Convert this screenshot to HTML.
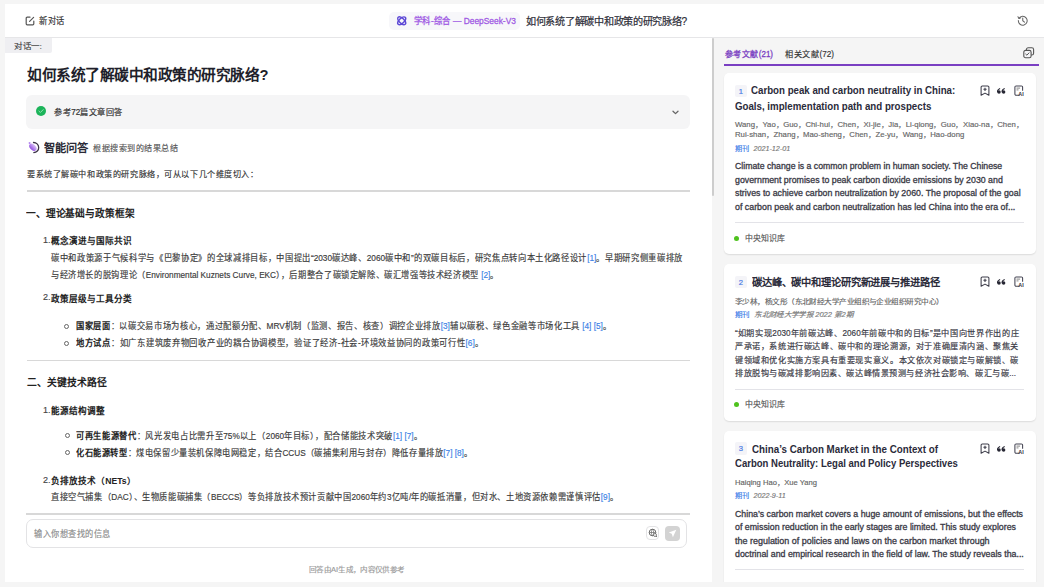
<!DOCTYPE html>
<html lang="zh-CN"><head><meta charset="utf-8">
<style>
html,body{margin:0;padding:0;-webkit-text-stroke-width:.15px;width:1044px;height:587px;overflow:hidden;background:#f5f5f5;font-family:"Liberation Sans",sans-serif;color:#333}
.a{position:absolute}
.l{position:absolute;white-space:nowrap;line-height:12px;height:12px;transform-origin:0 50%}
#hdr{position:absolute;left:4.5px;top:4px;width:1039.5px;height:33px;background:#fff;border-bottom:1px solid #e6e6e8}
#left{position:absolute;left:4.5px;top:38px;width:707.5px;height:544.2px;background:#fff;overflow:hidden}
#track{position:absolute;left:712px;top:38px;width:7px;height:544.2px;background:#f5f5f5}
#thumb{position:absolute;left:712px;top:38px;width:2.2px;height:158px;background:#cdcdcd;border-radius:1px}
#vline{display:none}
#right{position:absolute;left:720px;top:38px;width:324px;height:544.2px;background:#f5f5f5;overflow:hidden}
.b,b,.ct{font-weight:bold;-webkit-text-stroke-width:0}
.ref{color:#3b82e6}
.hr{position:absolute;height:1.8px;background:#d8d8d8}
.card{position:absolute;left:3.9px;width:312.3px;background:#fff;border-radius:5px;box-shadow:0 1px 1.5px rgba(0,0,0,.1)}
.badge{position:absolute;left:11.2px;width:11.8px;height:12.8px;background:#f4f4f8;border-radius:2px;color:#4b7be5;font-size:7.6px;line-height:13.4px;text-align:center;-webkit-text-stroke-width:.2px}
.ct{font-size:10.4px;font-weight:bold;color:#2b2b3a}
.au{font-size:7.2px;color:#666}
.jk{font-size:7.2px;color:#3b7be8}
.dt{font-size:7.2px;color:#777;font-style:italic}
.ab{font-size:8.5px;color:#3a3a46;-webkit-text-stroke-width:.3px}
.div{position:absolute;left:11.2px;width:289px;height:1px;background:#e3e3e8}
.dot{position:absolute;left:10.6px;width:5px;height:5px;border-radius:50%;background:#4fc21e}
.kb{font-size:7.9px;color:#555}
.ico{position:absolute}
</style></head><body>

<!-- HEADER -->
<div id="hdr"></div>
<svg class="ico" style="left:25px;top:16px" width="10" height="10" viewBox="0 0 10 10"><path d="M5 1.2H2.2a1 1 0 0 0-1 1v5.6a1 1 0 0 0 1 1h5.6a1 1 0 0 0 1-1V5" fill="none" stroke="#555" stroke-width="1.2" stroke-linecap="round"/><path d="M4.6 5.4L8.6 1.4" stroke="#555" stroke-width="1.2" stroke-linecap="round"/></svg>
<div class="l" style="left:38.9px;top:14.7px;font-size:8.7px;--w:25.6;transform:scaleX(0.9481)">新对话</div>

<div class="a" style="left:389.2px;top:11.5px;width:131px;height:18.4px;background:#f7f7fa;border-radius:5px"></div>
<svg class="ico" style="left:395.6px;top:15.3px" width="11.4" height="11.6" viewBox="0 0 12 12"><g fill="none" stroke="#5d48d6" stroke-width="1.55"><ellipse cx="6" cy="6" rx="2.6" ry="5.2" transform="rotate(45 6 6)"/><ellipse cx="6" cy="6" rx="2.6" ry="5.2" transform="rotate(-45 6 6)"/></g></svg>
<div class="l" style="left:413.7px;top:14.5px;font-size:8.9px;color:#a05ae4;-webkit-text-stroke-width:.3px;--w:101.9;transform:scaleX(0.9432)">学科-综合 — DeepSeek-V3</div>
<div class="l" style="left:526px;top:15.8px;font-size:10.4px;color:#2f2f3a;-webkit-text-stroke-width:.22px;--w:161.2;transform:scaleX(0.9724)">如何系统了解碳中和政策的研究脉络?</div>
<svg class="ico" style="left:1017px;top:14.6px" width="11.5" height="11" viewBox="0 0 12 11"><path d="M2.1 3.3A4.6 4.6 0 1 1 1.4 5.5" fill="none" stroke="#666" stroke-width="1.1" stroke-linecap="round"/><path d="M1 1.6L2.1 3.4 3.9 2.6" fill="none" stroke="#666" stroke-width="1.1" stroke-linecap="round" stroke-linejoin="round"/><path d="M6 3v2.7l1.8 1.6" fill="none" stroke="#666" stroke-width="1.1" stroke-linecap="round"/></svg>

<!-- LEFT -->
<div id="left"></div>
<div id="track"></div>
<div id="thumb"></div>
<div id="vline"></div>

<div class="a" style="left:4.5px;top:38.3px;width:47.2px;height:15.2px;background:#efeff2;border-radius:0 0 2px 0"></div>
<div class="l" style="left:14.3px;top:40.9px;font-size:8px;color:#444;--w:28;transform:scaleX(1.0673)">对话一:</div>

<div class="l b" style="left:27px;top:67px;height:16px;line-height:16px;font-size:15.2px;color:#1f1f2b;--w:241.5;transform:scaleX(0.9688)">如何系统了解碳中和政策的研究脉络?</div>

<div class="a" style="left:26.3px;top:95.3px;width:663.7px;height:33.6px;background:#f5f5f6;border-radius:6px"></div>
<svg class="ico" style="left:36px;top:106.3px" width="10" height="10" viewBox="0 0 10 10"><circle cx="5" cy="5" r="5" fill="#1cb45a"/><path d="M2.9 5.1L4.4 6.5 7.2 3.6" fill="none" stroke="#8fe0b0" stroke-width="1" stroke-linecap="round" stroke-linejoin="round"/></svg>
<div class="l" style="left:54px;top:106.3px;font-size:8.5px;-webkit-text-stroke-width:.22px;color:#333;--w:69;transform:scaleX(0.9521)">参考72篇文章回答</div>
<svg class="ico" style="left:671.5px;top:109.8px" width="7" height="5" viewBox="0 0 7 5"><path d="M1 1.2L3.5 3.6 6 1.2" fill="none" stroke="#666" stroke-width="1.3" stroke-linecap="round" stroke-linejoin="round"/></svg>

<svg class="ico" style="left:28px;top:141px" width="12.5" height="12.5" viewBox="0 0 12.5 12.5"><defs><linearGradient id="pg" x1="0" y1=".5" x2="1" y2=".5"><stop offset="0" stop-color="#8f4be0"/><stop offset="1" stop-color="#dcc4f7"/></linearGradient></defs><circle cx="1.6" cy="2.1" r="1.05" fill="#b78af0"/><ellipse cx="4.9" cy="6.3" rx="2.9" ry="4.3" transform="rotate(-45 4.9 6.3)" fill="url(#pg)"/><path d="M5.5 1.5A5 5 0 0 1 5.8 11.6" fill="none" stroke="#3d3548" stroke-width="1.3" stroke-linecap="round"/></svg>
<div class="l b" style="left:44px;top:141.5px;font-size:11.1px;color:#2a2a36;--w:44.5;transform:scaleX(1.0114)">智能问答</div>
<div class="l" style="left:93.4px;top:142px;font-size:8.5px;color:#555;--w:85.3;transform:scaleX(0.9478)">根据搜索到的结果总结</div>

<div class="l" style="left:26.7px;top:168px;font-size:8.5px;color:#333;--w:231.6;transform:scaleX(0.9531)">要系统了解碳中和政策的研究脉络，可从以下几个维度切入：</div>
<div class="hr" style="left:27px;top:190.1px;width:662.8px"></div>

<div class="l b" style="left:26.4px;top:208.2px;font-size:9.8px;color:#222;--w:108.6;transform:scaleX(0.9873)">一、理论基础与政策框架</div>

<div class="l" style="left:43px;top:233.7px;font-size:9px;color:#444">1.</div><div class="l b" style="left:51.3px;top:234.8px;font-size:8.6px;color:#222">概念演进与国际共识</div>
<div class="l" style="left:51px;top:251.5px;font-size:8.6px;color:#3a3a3a;--w:632;transform:scaleX(0.9626)">碳中和政策源于气候科学与《巴黎协定》的全球减排目标，中国提出“2030碳达峰、2060碳中和”的双碳目标后，研究焦点转向本土化路径设计<span class="ref">[1]</span>。早期研究侧重碳排放</div>
<div class="l" style="left:51px;top:268.7px;font-size:8.6px;color:#3a3a3a;--w:448;transform:scaleX(0.9571)">与经济增长的脱钩理论（Environmental Kuznets Curve, EKC），后期整合了碳锁定解除、碳汇增强等技术经济模型 <span class="ref">[2]</span>。</div>

<div class="l" style="left:43px;top:291.4px;font-size:9px;color:#444">2.</div><div class="l b" style="left:51.3px;top:292.5px;font-size:8.6px;color:#222">政策层级与工具分类</div>
<div class="a" style="left:64.3px;top:323.6px;width:3px;height:3px;border:1px solid #666;border-radius:50%"></div>
<div class="l" style="left:76.2px;top:319.6px;font-size:8.6px;color:#3a3a3a;--w:535.5;transform:scaleX(0.9624)"><b style="color:#222">国家层面</b>：以碳交易市场为核心，通过配额分配、MRV机制（监测、报告、核查）调控企业排放<span class="ref">[3]</span>辅以碳税、绿色金融等市场化工具 <span class="ref">[4]</span> <span class="ref">[5]</span>。</div>
<div class="a" style="left:64.3px;top:340.6px;width:3px;height:3px;border:1px solid #666;border-radius:50%"></div>
<div class="l" style="left:76.2px;top:336.6px;font-size:8.6px;color:#3a3a3a;--w:407.5;transform:scaleX(0.9696)"><b style="color:#222">地方试点</b>：如广东建筑废弃物回收产业的耦合协调模型，验证了经济-社会-环境效益协同的政策可行性<span class="ref">[6]</span>。</div>
<div class="hr" style="left:27px;top:359.6px;width:662.8px"></div>

<div class="l b" style="left:26.8px;top:377px;font-size:9.8px;color:#222">二、关键技术路径</div>
<div class="l" style="left:43px;top:403.9px;font-size:9px;color:#444">1.</div><div class="l b" style="left:51.3px;top:405px;font-size:8.6px;color:#222">能源结构调整</div>
<div class="a" style="left:64.5px;top:433.3px;width:3px;height:3px;border:1px solid #666;border-radius:50%"></div>
<div class="l" style="left:76.3px;top:429.9px;font-size:8.6px;color:#3a3a3a;--w:346.3;transform:scaleX(0.9624)"><b style="color:#222">可再生能源替代</b>：风光发电占比需升至75%以上（2060年目标），配合储能技术突破<span class="ref">[1]</span> <span class="ref">[7]</span>。</div>
<div class="a" style="left:64.5px;top:450.2px;width:3px;height:3px;border:1px solid #666;border-radius:50%"></div>
<div class="l" style="left:76.3px;top:446.8px;font-size:8.6px;color:#3a3a3a;--w:396.5;transform:scaleX(0.9557)"><b style="color:#222">化石能源转型</b>：煤电保留少量装机保障电网稳定，结合CCUS（碳捕集利用与封存）降低存量排放<span class="ref">[7]</span> <span class="ref">[8]</span>。</div>
<div class="l" style="left:43px;top:473.5px;font-size:9px;color:#444">2.</div><div class="l b" style="left:51.3px;top:474.6px;font-size:8.6px;color:#222">负排放技术（NETs）</div>
<div class="l" style="left:51px;top:491px;font-size:8.6px;color:#3a3a3a;--w:567.6;transform:scaleX(0.9578)">直接空气捕集（DAC）、生物质能碳捕集（BECCS）等负排放技术预计贡献中国2060年约3亿吨/年的碳抵消量，但对水、土地资源依赖需谨慎评估<span class="ref">[9]</span>。</div>
<div class="hr" style="left:26.3px;top:513.1px;width:663.3px"></div>

<div class="a" style="left:26.3px;top:518.5px;width:659.1px;height:27.6px;border:1px solid #e3e3e5;border-radius:7px;background:#fff"></div>
<div class="l" style="left:33.7px;top:528px;font-size:8.6px;color:#8a8a8a;--w:77;transform:scaleX(0.9506)">输入你想查找的信息</div>
<div class="a" style="left:645.8px;top:525.8px;width:11.7px;height:12.6px;border:1px solid #e3e3e5;border-radius:4px;background:#fff"></div>
<svg class="ico" style="left:647.5px;top:528px" width="10" height="10" viewBox="0 0 10 10"><circle cx="4.5" cy="4.5" r="3.3" fill="none" stroke="#6a6a6a" stroke-width="1"/><path d="M1.2 4.5h6.6M4.5 1.2c-1.6 2-1.6 4.6 0 6.6M4.5 1.2c1.6 2 1.6 4.6 0 6.6" fill="none" stroke="#6a6a6a" stroke-width=".7"/><circle cx="7" cy="7" r="1.5" fill="#fff" stroke="#6a6a6a" stroke-width=".8"/><path d="M8 8L9 9" stroke="#6a6a6a" stroke-width=".9"/></svg>
<div class="a" style="left:665.2px;top:525.8px;width:14.5px;height:14.8px;border-radius:4px;background:#d3d3d3"></div>
<svg class="ico" style="left:668px;top:529px" width="9" height="9" viewBox="0 0 9 9"><path d="M8.3 .7L.8 3.6 3.7 4.8 4.9 8.3z" fill="#fff"/></svg>

<div class="l" style="left:308.7px;top:564px;font-size:7.2px;color:#9a9a9a;--w:95.3;transform:scaleX(1.0496)">回答由AI生成，内容仅供参考</div>

<!-- RIGHT -->
<div id="right">
<div class="l" style="left:5px;top:9.8px;font-size:8.5px;color:#7a3fc2;-webkit-text-stroke-width:.3px;--w:48;transform:scaleX(0.9389)">参考文献(21)</div>
<div class="l" style="left:64.7px;top:9.8px;font-size:8.5px;color:#333;--w:49.1;transform:scaleX(0.9604)">相关文献(72)</div>
<svg class="ico" style="left:303px;top:9.2px" width="11.5" height="11.5" viewBox="0 0 11.5 11.5"><rect x="3.4" y=".8" width="7.2" height="7.2" rx="1.8" fill="none" stroke="#555" stroke-width="1.1"/><rect x=".8" y="3.4" width="7.3" height="7.3" rx="1.8" fill="#f5f5f7" stroke="#555" stroke-width="1.1"/><path d="M2.7 7.1L3.9 8.2 6 5.9" fill="none" stroke="#555" stroke-width="1" stroke-linecap="round" stroke-linejoin="round"/></svg>
<div class="a" style="left:4.2px;top:25.6px;width:315px;height:2px;background:#7a3fc2"></div>

<!-- card 1 -->
<div class="card" style="top:34.8px;height:181.4px">
 <div class="badge" style="top:11.9px">1</div>
 <div class="l ct" style="left:26.9px;top:12.2px;--w:204.2;transform:scaleX(0.9332)">Carbon peak and carbon neutrality in China:</div>
 <div class="l ct" style="left:11.1px;top:28px;--w:196.3;transform:scaleX(0.9340)">Goals, implementation path and prospects</div>
 <svg class="ico" style="left:255.8px;top:12.700000000000001px" width="10" height="11" viewBox="0 0 10 11"><path d="M1.1 10.2V2.1A1.2 1.2 0 0 1 2.3.9h5.4a1.2 1.2 0 0 1 1.2 1.2v8.1L5 8.1z" fill="none" stroke="#3d3d4a" stroke-width="1.05" stroke-linejoin="round"/><path d="M5 2.7v3.2M3.4 4.3h3.2" stroke="#3d3d4a" stroke-width="1.1"/></svg>
 <svg class="ico" style="left:273px;top:15.3px" width="9" height="6" viewBox="0 0 9 6"><g fill="#262633"><circle cx="2" cy="4.1" r="1.75"/><circle cx="6.6" cy="4.1" r="1.75"/></g><path d="M.45 4.2C.35 2.5 1.3 1.1 3.1.5M5.05 4.2C4.95 2.5 5.9 1.1 7.7.5" fill="none" stroke="#262633" stroke-width="1.1"/></svg>
 <svg class="ico" style="left:290.3px;top:12.6px" width="10" height="11" viewBox="0 0 10 11"><path d="M5.6 10.2H2.1A1.2 1.2 0 0 1 .9 9V2.1A1.2 1.2 0 0 1 2.1.9h5.3a1.2 1.2 0 0 1 1.2 1.2v3.6" fill="none" stroke="#444452" stroke-width="1.05"/><path d="M2.5 3.1h3.6M2.5 4.9h2" stroke="#666" stroke-width=".8"/><text x="4.3" y="10.7" font-size="5.4" font-weight="bold" fill="#333340" font-family="Liberation Sans">AI</text></svg>
 <div class="l au" style="left:11.1px;top:46.2px;--w:288.3;transform:scaleX(1.0774)">Wang，Yao，Guo，Chi-hui，Chen，Xi-jie，Jia，Li-qiong，Guo，Xiao-na，Chen，</div>
 <div class="l au" style="left:11.1px;top:56.2px;--w:229.3;transform:scaleX(1.0779)">Rui-shan，Zhang，Mao-sheng，Chen，Ze-yu，Wang，Hao-dong</div>
 <div class="l" style="left:11.1px;top:67px"><span class="jk">期刊</span> <span class="dt">2021-12-01</span></div>
 <div class="l ab" style="left:11.3px;top:87.7px;--w:267.2;transform:scaleX(1.0239)">Climate change is a common problem in human society. The Chinese</div>
 <div class="l ab" style="left:11.3px;top:101.1px;--w:267.8;transform:scaleX(1.0342)">government promises to peak carbon dioxide emissions by 2030 and</div>
 <div class="l ab" style="left:11.3px;top:114.5px;--w:285.6;transform:scaleX(1.0355)">strives to achieve carbon neutralization by 2060. The proposal of the goal</div>
 <div class="l ab" style="left:11.3px;top:127.9px;--w:280.3;transform:scaleX(1.0388)">of carbon peak and carbon neutralization has led China into the era of...</div>
 <div class="div" style="top:149.2px"></div>
 <div class="dot" style="top:163.5px"></div>
 <div class="l kb" style="left:21.1px;top:160px">中央知识库</div>
</div>

<!-- card 2 -->
<div class="card" style="top:225.7px;height:156.9px">
 <div class="badge" style="top:12px">2</div>
 <div class="l ct" style="left:27.7px;top:13.3px;--w:187.6;transform:scaleX(0.9874)">碳达峰、碳中和理论研究新进展与推进路径</div>
 <svg class="ico" style="left:255.8px;top:12.700000000000001px" width="10" height="11" viewBox="0 0 10 11"><path d="M1.1 10.2V2.1A1.2 1.2 0 0 1 2.3.9h5.4a1.2 1.2 0 0 1 1.2 1.2v8.1L5 8.1z" fill="none" stroke="#3d3d4a" stroke-width="1.05" stroke-linejoin="round"/><path d="M5 2.7v3.2M3.4 4.3h3.2" stroke="#3d3d4a" stroke-width="1.1"/></svg>
 <svg class="ico" style="left:273px;top:15.3px" width="9" height="6" viewBox="0 0 9 6"><g fill="#262633"><circle cx="2" cy="4.1" r="1.75"/><circle cx="6.6" cy="4.1" r="1.75"/></g><path d="M.45 4.2C.35 2.5 1.3 1.1 3.1.5M5.05 4.2C4.95 2.5 5.9 1.1 7.7.5" fill="none" stroke="#262633" stroke-width="1.1"/></svg>
 <svg class="ico" style="left:290.3px;top:12.6px" width="10" height="11" viewBox="0 0 10 11"><path d="M5.6 10.2H2.1A1.2 1.2 0 0 1 .9 9V2.1A1.2 1.2 0 0 1 2.1.9h5.3a1.2 1.2 0 0 1 1.2 1.2v3.6" fill="none" stroke="#444452" stroke-width="1.05"/><path d="M2.5 3.1h3.6M2.5 4.9h2" stroke="#666" stroke-width=".8"/><text x="4.3" y="10.7" font-size="5.4" font-weight="bold" fill="#333340" font-family="Liberation Sans">AI</text></svg>
 <div class="l au" style="left:11.1px;top:32.5px;--w:208.4;transform:scaleX(1.0633)">李少林，杨文彤（东北财经大学产业组织与企业组织研究中心）</div>
 <div class="l" style="left:11.1px;top:42.3px;--w:118;transform:scaleX(1.0495)"><span class="jk">期刊</span> <span class="dt">东北财经大学学报 2022 第2期</span></div>
 <div class="l ab" style="-webkit-text-stroke-width:.18px;left:11.3px;top:63.2px;--w:284.3;transform:scaleX(0.9621)">“如期实现2030年前碳达峰、2060年前碳中和的目标”是中国向世界作出的庄</div>
 <div class="l ab" style="-webkit-text-stroke-width:.18px;left:11.3px;top:76.7px;--w:284;transform:scaleX(0.9562)">严承诺，系统进行碳达峰、碳中和的理论溯源，对于准确厘清内涵、聚焦关</div>
 <div class="l ab" style="-webkit-text-stroke-width:.18px;left:11.3px;top:90.2px;--w:284;transform:scaleX(0.9562)">键领域和优化实施方案具有重要现实意义。本文依次对碳锁定与碳解锁、碳</div>
 <div class="l ab" style="-webkit-text-stroke-width:.18px;left:11.3px;top:103.7px;--w:281;transform:scaleX(0.9522)">排放脱钩与碳减排影响因素、碳达峰情景预测与经济社会影响、碳汇与碳...</div>
 <div class="div" style="top:125.3px"></div>
 <div class="dot" style="top:138.5px"></div>
 <div class="l kb" style="left:21.1px;top:135px">中央知识库</div>
</div>

<!-- card 3 -->
<div class="card" style="top:393px;height:170px">
 <div class="badge" style="top:11px">3</div>
 <div class="l ct" style="left:27.7px;top:12.7px;--w:186;transform:scaleX(0.9411)">China’s Carbon Market in the Context of</div>
 <div class="l ct" style="left:11.1px;top:27px;--w:222.8;transform:scaleX(0.9186)">Carbon Neutrality: Legal and Policy Perspectives</div>
 <svg class="ico" style="left:255.8px;top:12.200000000000001px" width="10" height="11" viewBox="0 0 10 11"><path d="M1.1 10.2V2.1A1.2 1.2 0 0 1 2.3.9h5.4a1.2 1.2 0 0 1 1.2 1.2v8.1L5 8.1z" fill="none" stroke="#3d3d4a" stroke-width="1.05" stroke-linejoin="round"/><path d="M5 2.7v3.2M3.4 4.3h3.2" stroke="#3d3d4a" stroke-width="1.1"/></svg>
 <svg class="ico" style="left:273px;top:14.8px" width="9" height="6" viewBox="0 0 9 6"><g fill="#262633"><circle cx="2" cy="4.1" r="1.75"/><circle cx="6.6" cy="4.1" r="1.75"/></g><path d="M.45 4.2C.35 2.5 1.3 1.1 3.1.5M5.05 4.2C4.95 2.5 5.9 1.1 7.7.5" fill="none" stroke="#262633" stroke-width="1.1"/></svg>
 <svg class="ico" style="left:290.3px;top:12.1px" width="10" height="11" viewBox="0 0 10 11"><path d="M5.6 10.2H2.1A1.2 1.2 0 0 1 .9 9V2.1A1.2 1.2 0 0 1 2.1.9h5.3a1.2 1.2 0 0 1 1.2 1.2v3.6" fill="none" stroke="#444452" stroke-width="1.05"/><path d="M2.5 3.1h3.6M2.5 4.9h2" stroke="#666" stroke-width=".8"/><text x="4.3" y="10.7" font-size="5.4" font-weight="bold" fill="#333340" font-family="Liberation Sans">AI</text></svg>
 <div class="l au" style="left:11.1px;top:46px;--w:82;transform:scaleX(1.0585)">Haiqing Hao，Xue Yang</div>
 <div class="l" style="left:11.1px;top:55.5px"><span class="jk">期刊</span> <span class="dt">2022-9-11</span></div>
 <div class="l ab" style="left:11.3px;top:77px;--w:288;transform:scaleX(1.0326)">China’s carbon market covers a huge amount of emissions, but the effects</div>
 <div class="l ab" style="left:11.3px;top:90.4px;--w:281;transform:scaleX(1.0368)">of emission reduction in the early stages are limited. This study explores</div>
 <div class="l ab" style="left:11.3px;top:103.7px;--w:254.6;transform:scaleX(1.0545)">the regulation of policies and laws on the carbon market through</div>
 <div class="l ab" style="left:11.3px;top:117px;--w:288.8;transform:scaleX(1.0366)">doctrinal and empirical research in the field of law. The study reveals tha...</div>
 <div class="div" style="top:138.1px"></div>
</div>
</div>

<script>
document.querySelectorAll('.l').forEach(function(e){
  var w=parseFloat(getComputedStyle(e).getPropertyValue('--w'));
  if(!w) return;
  e.style.transform='none';e.style.transform='none';e.style.transform='none';e.style.transform='none';var n=e.getBoundingClientRect().width;
  if(n>0) e.style.transform='scaleX('+(w/n)+')';
});
</script>
</body></html>
